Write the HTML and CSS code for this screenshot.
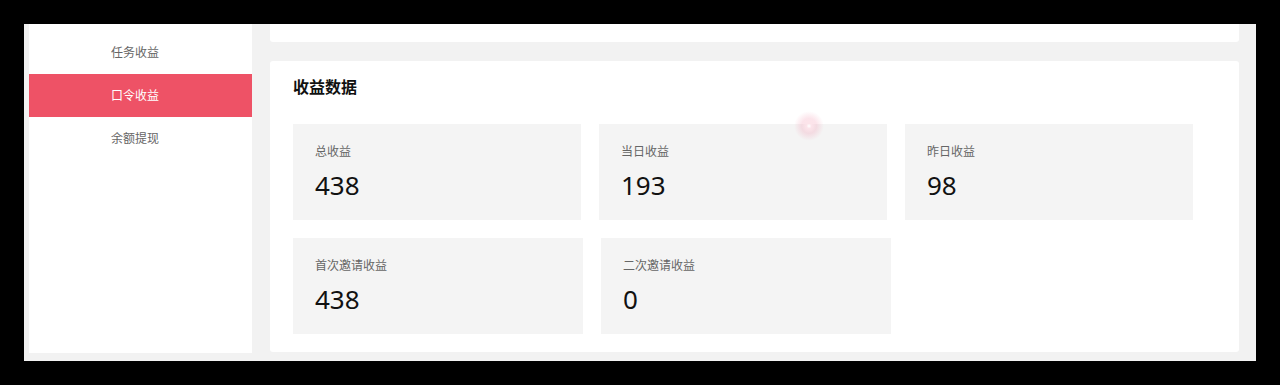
FILE: index.html
```html
<!DOCTYPE html>
<html lang="zh-CN">
<head>
    <meta charset="UTF-8">
    <title>收益数据</title>
    <link rel="stylesheet" href="styles.css">
</head>
<body>
    <div class="window">
        <!-- 左侧菜单 -->
        <div class="sidebar">
            <ul class="nav-list">
                <li class="nav-item">任务收益</li>
                <li class="nav-item active">口令收益</li>
                <li class="nav-item">余额提现</li>
            </ul>
        </div>

        <!-- 右侧内容 -->
        <div class="main">
            <div class="card card-top"></div>
            <div class="card card-stats">
                <h2 class="card-title">收益数据</h2>
                <div class="stat-row">
                    <div class="stat-box">
                        <div class="stat-label">总收益</div>
                        <div class="stat-value">438</div>
                    </div>
                    <div class="stat-box">
                        <div class="stat-label">当日收益</div>
                        <div class="stat-value">193</div>
                    </div>
                    <div class="stat-box">
                        <div class="stat-label">昨日收益</div>
                        <div class="stat-value">98</div>
                    </div>
                </div>
                <div class="stat-row">
                    <div class="stat-box wide">
                        <div class="stat-label">首次邀请收益</div>
                        <div class="stat-value">438</div>
                    </div>
                    <div class="stat-box wide">
                        <div class="stat-label">二次邀请收益</div>
                        <div class="stat-value">0</div>
                    </div>
                </div>
                <span class="cursor-glow"></span>
            </div>
        </div>
    </div>
</body>
</html>
```

FILE: styles.css
```css
body {
    margin: 0;
    padding: 24px;
    background-color: #000;
    font-family: "Noto Sans", "Noto Sans CJK SC", sans-serif;
}

.window {
    display: flex;
    width: 1232px;
    height: 337px;
    background-color: #f2f2f2;
    overflow: hidden;
    padding-left: 5px;
    box-sizing: border-box;
}

/* 左侧菜单 */
.sidebar {
    width: 223px;
    flex: 0 0 auto;
    background-color: #fff;
    margin-bottom: 8px;
    padding-top: 7px;
    box-sizing: border-box;
}

.nav-list {
    list-style: none;
    margin: 0;
    padding: 0;
}

.nav-item {
    height: 43px;
    line-height: 44px;
    padding-left: 82px;
    font-size: 12px;
    color: #666;
}

.nav-item.active {
    background-color: #ee5266;
    color: #fff;
}

/* 右侧内容 */
.main {
    flex: 1;
    display: flex;
    flex-direction: column;
    gap: 19px;
    margin-left: 18px;
    margin-right: 17px;
}

.card {
    background-color: #fff;
    border-radius: 3px;
}

.card-top {
    height: 18px;
    border-radius: 0 0 3px 3px;
}

.card-stats {
    position: relative;
    padding: 14px 23px 18px;
}

.card-title {
    margin: 0 0 25px;
    font-size: 16px;
    line-height: 24px;
    font-weight: bold;
    color: #111;
}

.stat-row {
    display: flex;
    gap: 18px;
}

.stat-row + .stat-row {
    margin-top: 18px;
}

.stat-box {
    width: 288px;
    height: 96px;
    padding: 20px 22px 0;
    box-sizing: border-box;
    background-color: #f4f4f4;
}

.stat-box.wide {
    width: 290px;
}

.stat-label {
    font-size: 12px;
    line-height: 16px;
    color: #666;
}

.stat-value {
    margin-top: 7px;
    font-size: 26px;
    line-height: 36px;
    color: #111;
}

/* 鼠标点击光晕 */
.cursor-glow {
    position: absolute;
    left: 524px;
    top: 50px;
    width: 30px;
    height: 30px;
    border-radius: 50%;
    background: radial-gradient(circle, #fff 0, #fce4ea 12%, rgba(240, 130, 160, 0.22) 35%, rgba(255, 255, 255, 0) 70%);
}
```
